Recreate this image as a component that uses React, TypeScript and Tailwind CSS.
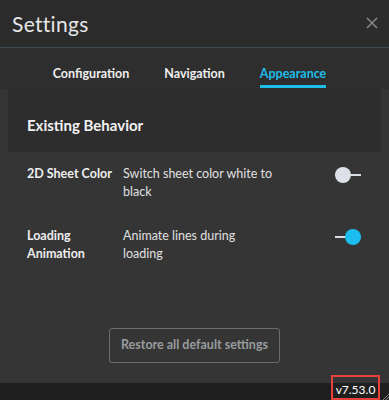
import React from "react";

const Toggle = ({ on }: { on: boolean }) => (
  <div className="relative w-[26px] h-[18px] flex items-center">
    <div className="h-[2px] w-full bg-[#d8dce3]" />
    <div
      className={
        on
          ? "absolute right-0 top-[1px] w-[16px] h-[16px] rounded-full bg-[#1bbeef]"
          : "absolute left-0 top-[1px] w-[16px] h-[16px] rounded-full bg-[#dde1e7]"
      }
    />
  </div>
);

const rows = [
  { label: ["2D Sheet Color"], desc: ["Switch sheet color white to", "black"], on: false },
  { label: ["Loading", "Animation"], desc: ["Animate lines during", "loading"], on: true },
];

const App = () => {
  return (
    <div className="w-[389px] h-[400px] bg-[#353535] flex flex-col font-['Lato','Noto_Sans',sans-serif] text-[#eeeeee]">
      <div className="h-[48px] shrink-0 bg-[#2b2b2b] border-b border-[#3b4850] flex items-center justify-between pl-3 pr-[11px]">
        <span className="text-[21px] tracking-[0.3px] text-[#e6e6e6]">Settings</span>
        <svg width="12" height="12" viewBox="0 0 12 12" className="mb-[1px]">
          <path d="M1 1L11 11M11 1L1 11" stroke="#8a8f94" strokeWidth="1.4" />
        </svg>
      </div>

      <div className="h-[41px] shrink-0 bg-[#2e2e2e] flex justify-center gap-[35px] pr-[10px]">
        <div className="pt-[17px] text-[12.5px] font-bold text-[#eeeeee]">Configuration</div>
        <div className="pt-[17px] text-[12.5px] font-bold text-[#eeeeee]">Navigation</div>
        <div className="pt-[17px] text-[12.5px] font-bold text-[#1fbde9] relative">
          Appearance
          <div className="absolute left-0 right-0 bottom-[1px] h-[3px] bg-[#1fbde9]" />
        </div>
      </div>

      <div className="flex-1 flex flex-col">
        <div className="mx-2 h-[63px] bg-[#2d2d2d] flex items-end pb-[16px] pl-[19px]">
          <span className="text-[15px] font-bold text-[#f2f2f2]">Existing Behavior</span>
        </div>

        <div className="flex flex-col gap-[26px] pt-[13px] pl-[27px] pr-[28px]">
          {rows.map((r) => (
            <div key={r.desc[0]} className="flex items-start leading-[18px]">
              <div className="w-[96px] text-[12.5px] font-bold text-[#eeeeee]">
                {r.label.map((l) => (
                  <div key={l}>{l}</div>
                ))}
              </div>
              <div className="w-[170px] text-[12.5px] text-[#e0e0e0]">
                {r.desc.map((d) => (
                  <div key={d}>{d}</div>
                ))}
              </div>
              <div className="flex-1 flex justify-end pt-[1px]">
                <Toggle on={r.on} />
              </div>
            </div>
          ))}
        </div>

        <div className="flex-1" />
        <div className="flex justify-center pb-[20px]">
          <div className="w-[171px] h-[35px] border border-[#6a6d70] rounded-[3px] flex items-center justify-center text-[12.5px] font-bold text-[#999c9f]">
            Restore all default settings
          </div>
        </div>
      </div>

      <div className="h-[17px] shrink-0 bg-[#1f1f1f] flex justify-end items-end pr-[9px] relative">
        <div className="relative h-[25px] w-[49px] border-2 border-[#e8413c] flex items-end justify-center pb-[1px] -mt-[8px]">
          <span className="text-[12px] text-white leading-[14px]">v7.53.0</span>
        </div>
        <svg width="6" height="6" viewBox="0 0 6 6" className="absolute right-0 bottom-0">
          <path d="M0 6L6 0M3 6L6 3" stroke="#8a8a8a" strokeWidth="1" />
        </svg>
      </div>
    </div>
  );
};

export default App;
